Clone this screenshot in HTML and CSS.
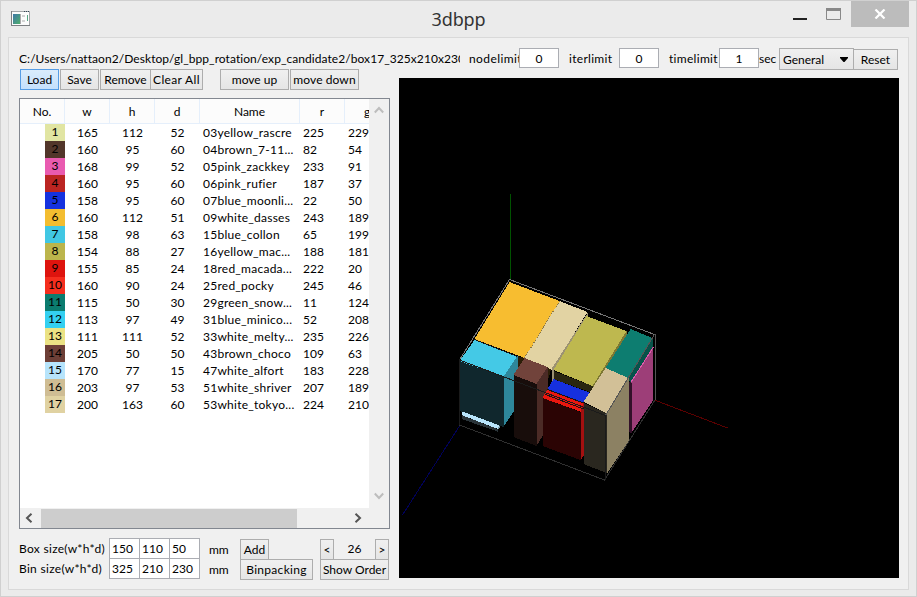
FILE: index.html
```html
<!DOCTYPE html>
<html lang="en">
<head>
<meta charset="utf-8">
<title>3dbpp</title>
<link rel="stylesheet" href="styles.css">
</head>
<body>
<div class="window">
  <header class="titlebar">
    <svg class="app-icon" width="19" height="16" viewBox="0 0 19 16">
      <defs><linearGradient id="ic" x1="0" y1="0" x2="1" y2="1"><stop offset="0" stop-color="#3f78a8"/><stop offset="1" stop-color="#4fae6c"/></linearGradient></defs>
      <path d="M.5 .5h18v14H.5z" fill="#fcfcfc" stroke="#a4a6a8"/>
      <path d="M.5 0v15M0 14.500h19" stroke="#7c7f82"/>
      <path d="M13 .5h1M15 .5h1M17 .5h1" stroke="#345"/>
      <path d="M2 3h7v10H2z" fill="url(#ic)"/>
      <path d="M9.500 3v10" stroke="#aaa"/>
      <path d="M11 4h3v2h-3zM11 9h3v2h-3z" fill="#d4d4d4"/>
      <path d="M16.500 4v6" stroke="#58a584"/>
    </svg>
    <h1 class="title">3dbpp</h1>
    <div class="controls">
      <svg class="min" width="14" height="2"><path d="M0 0h14v2H0z" fill="#222"/></svg>
      <svg class="max" width="15" height="12"><path d="M.5 .5h14v11H.5z" fill="none" stroke="#888"/><path d="M0 0h15v3H0z" fill="#888"/></svg>
      <div class="close"><svg width="12" height="10" viewBox="0 0 12 10"><path d="M1.500 .5l9 9M10.500 .5l-9 9" stroke="#fff" stroke-width="2.200"/></svg></div>
    </div>
  </header>
  <main class="client">
    <section class="left">
      <div class="path">C:/Users/nattaon2/Desktop/gl_bpp_rotation/exp_candidate2/box17_325x210x230</div>
      <div class="toolbar">
        <button class="btn load">Load</button><button class="btn save">Save</button><button class="btn remove">Remove</button><button class="btn clear">Clear All</button><button class="btn up">move up</button><button class="btn down">move down</button>
      </div>
      <div class="list">
        <div class="view">
          <table class="grid">
            <colgroup><col class="c"><col class="c"><col class="c"><col class="c"><col class="cn"><col class="c"><col class="c"></colgroup>
            <thead><tr><th>No.</th><th>w</th><th>h</th><th>d</th><th>Name</th><th>r</th><th>g</th></tr></thead>
            <tbody id="rows"></tbody>
          </table>
        </div>
        <div class="vbar">
          <svg width="10" height="8" viewBox="0 0 10 8"><path d="M.8 6.500L5 2l4.200 4.500" fill="none" stroke="#bdbdbd" stroke-width="2"/></svg>
          <svg width="10" height="8" viewBox="0 0 10 8"><path d="M.8 1.500L5 6l4.200-4.500" fill="none" stroke="#bdbdbd" stroke-width="2"/></svg>
        </div>
        <div class="hbar">
          <svg width="8" height="10" viewBox="0 0 8 10"><path d="M6.500 .8L2 5l4.500 4.200" fill="none" stroke="#555" stroke-width="2"/></svg>
          <div class="track"><div class="thumb"></div></div>
          <svg width="8" height="10" viewBox="0 0 8 10"><path d="M1.500 .8L6 5 1.500 9.200" fill="none" stroke="#555" stroke-width="2"/></svg>
        </div>
      </div>
      <div class="sizes">
        <div class="labels"><span>Box size(w*h*d)</span><span>Bin size(w*h*d)</span></div>
        <div class="fields">
          <div class="field">150</div><div class="field">110</div><div class="field">50</div>
          <div class="field">325</div><div class="field">210</div><div class="field">230</div>
        </div>
        <div class="units"><span>mm</span><span>mm</span></div>
        <div class="actions"><button class="btn add">Add</button><button class="btn pack">Binpacking</button></div>
        <div class="order"><div class="pager"><button class="btn step">&lt;</button><span class="page">26</span><button class="btn step">&gt;</button></div><button class="btn show">Show Order</button></div>
      </div>
    </section>
    <section class="right">
      <div class="limits">
        <span class="lim node">nodelimit</span><div class="num">0</div>
        <span class="lim iter">iterlimit</span><div class="num">0</div>
        <span class="lim time">timelimit</span><div class="num">1</div>
        <span class="sec">sec</span>
        <button class="btn select">General<svg width="8" height="5"><path d="M0 0h8v1L4.500 5h-1L0 1z" fill="#000"/></svg></button>
        <button class="btn reset">Reset</button>
      </div>
      <svg class="scene" width="500" height="500" viewBox="399.500 78 500 500" shape-rendering="crispEdges">
        <path d="M510 194h1v85h-1z" fill="#005200"/>
        <path d="M655 400L728 428" stroke="#5a0000"/>
        <path d="M460 426L403 515" stroke="#000058"/>
        <path d="M510 279.500L655 334.500M460 360L510 279.500" stroke="#777" fill="none"/>
        <path d="M655.500 334V400L605 480 460 425" stroke="#2f2f2f" fill="none"/>
        <path d="M518 356L525 358 552 368 543 398 514 376z" fill="#2b1e08"/>
        <path d="M510 282L560 301 525 358 475 339z" fill="#f7bd30"/>
        <path d="M560 301L588 312 552 370 548 367 525 358z" fill="#e2d3a3"/>
        <path d="M560 301L525 358" stroke="#8a7744" stroke-dasharray="1 1"/>
        <path d="M588 313V318L554 371V381H552V369z" fill="#9c9272"/>
        <path d="M587 316L627 331 593 386 554 370z" fill="#beb84f"/>
        <path d="M627 331V336L594 389 593 386z" fill="#7d7833"/>
        <path d="M554 371L593 386V393L554 379z" fill="#292611"/>
        <path d="M554 379L591 393 584 403 548 389z" fill="#1630df"/>
        <path d="M548 389L584 403 582 412 543 398z" fill="#e9170f"/>
        <path d="M543 398L581 412V460L543 446z" fill="#2b0404"/>
        <path d="M581 412L584 403V456L581 460z" fill="#a41010"/>
        <path d="M475 340L518 356 504 377 460 361z" fill="#44c9e6"/>
        <path d="M460 361L504 377V427L460 411z" fill="#10272d"/>
        <path d="M504 377L518 356V406L504 427z" fill="#2e879b"/>
        <path d="M463 411.500L500 425.500 498.500 429 462 415z" fill="#b8e5fc"/>
        <path d="M462 415L498 429V431.500L462 419z" fill="#293338"/>
        <path d="M498 429L500 426V428L498 431z" fill="#7c9caa"/>
        <path d="M525 358L548 367 537 384 514 375z" fill="#71433b"/>
        <path d="M514 375L537 384V446L514 437z" fill="#180d0b"/>
        <path d="M537 384L548 367V389L543 398V436L537 446z" fill="#4b2b26"/>
        <path d="M631 329L653 338 629 378 606 368z" fill="#0d7d70"/>
        <path d="M653 338V348L631 384 629 378z" fill="#07534a"/>
        <path d="M653 347L654 400 632 433 631 383z" fill="#9d3e78"/>
        <path d="M631 383L654 347" stroke="#df5cae"/>
        <path d="M629 381L632 383V433L629 432z" fill="#33112a"/>
        <path d="M606 368L629 378 607 413 584 402z" fill="#d2c097"/>
        <path d="M584 403L607 413V473L584 464z" fill="#2a271f"/>
        <path d="M607 413L629 378V441L608 473z" fill="#8c8163"/>
        <path d="M475 339.500L518 356.500M548 389.500L584 403M546 394.500L584 409" stroke="#161616"/>
        <path d="M460 425V360L606 415.500V480" stroke="#1b1b1b" fill="none"/>
        <path d="M606 415.500L655 334.500" stroke="#555"/>
        <path d="M655.500 334V400" stroke="#555"/>
      </svg>
    </section>
  </main>
</div>
<script src="rows.js"></script>
</body>
</html>
```
FILE: styles.css
```css
* { box-sizing: border-box; }
body { margin: 0; font: 12px/17px Lato, "Liberation Sans", sans-serif; color: #000; }
.window { width: 917px; height: 597px; background: #ebebeb; border: 1px solid #d0d0d0; padding: 0 7px 7px; overflow: hidden; display: flex; flex-direction: column; }
.titlebar { height: 36px; flex: none; display: flex; position: relative; justify-content: center; }
.app-icon { position: absolute; left: 3px; top: 10px; }
.title { margin: 6px 0 0; font: 18px/24px "Noto Sans", sans-serif; letter-spacing: -.15px; color: #333; }
.controls { position: absolute; right: 0; top: 0; display: flex; }
.min { margin: 17px 19px 0 0; }
.max { margin: 7px 10px 0 0; }
.close { width: 58px; height: 26px; background: #bcbcbc; display: flex; align-items: center; justify-content: center; }
.client { height: 553px; border: 1px solid #d9d9d9; background: #f0f0f0; display: flex; padding: 10px 9px 10px 10px; gap: 9px; }
.left { width: 371px; flex: none; white-space: nowrap; }
.path { width: 441px; height: 21px; overflow: hidden; padding-top: 2px; letter-spacing: .06px; }
.btn { font: inherit; color: #000; height: 21px; padding: 0; border: 1px solid #adadad; background: linear-gradient(#f0f0f0, #e5e5e5); flex: none; white-space: nowrap; text-align: center; line-height: 19px; }
.toolbar { display: flex; height: 21px; }
.load { width: 39px; margin: 0 1px; border-color: #569de5; background: linear-gradient(#daecfc, #c4e0fc); }
.save { width: 39px; margin-right: 1px; }
.remove { width: 51px; margin-right: -1px; }
.clear { width: 53px; margin-right: 17px; letter-spacing: .35px; }
.up { width: 69px; margin-right: 1px; }
.down { width: 69px; letter-spacing: .1px; }
.list { width: 371px; height: 431px; margin-top: 8px; border: 1px solid #828790; background: #f0f0f0; display: grid; grid-template: 409px 20px / 349px 20px; }
.view { background: #fff; overflow: hidden; }
.grid { width: 370px; table-layout: fixed; border-collapse: separate; border-spacing: 0; }
.c { width: 45px; }
.cn { width: 100px; }
.grid th { height: 25px; padding: 0; font-weight: 400; background: #fcfcfc; border-right: 1px solid #e5effb; border-bottom: 1px solid #e5effb; }
.grid td { height: 17px; padding: 0; line-height: 16px; text-align: center; }
.grid td.text { text-align: left; padding-left: 3px; line-height: 18px; }
.text span { display: block; height: 17px; }
.name { letter-spacing: .25px; }
.swatch { width: 20px; height: 17px; margin-left: 25px; }
.vbar { display: flex; flex-direction: column; align-items: center; justify-content: space-between; padding: 7px 1px 8px 0; }
.hbar { grid-column: 1 / 3; display: flex; align-items: center; padding: 0 27px 0 5px; }
.track { flex: 1; height: 19px; margin: 0 4px 0 8px; }
.thumb { width: 256px; height: 19px; background: #cdcdcd; }
.sizes { display: flex; margin-top: 9px; height: 42px; }
.labels { width: 90px; display: flex; flex-direction: column; gap: 3px; padding-top: 2px; letter-spacing: .3px; }
.fields { width: 91px; display: grid; grid-template: 20px 20px / 30px 30px 31px; }
.field { background: #fff; border: 1px solid #abadb3; margin-right: -1px; margin-bottom: -1px; padding-left: 2px; line-height: 19px; }
.field:nth-child(3n) { margin-right: 0; }
.units { width: 40px; padding: 3px 0 0 9px; display: flex; flex-direction: column; gap: 3px; }
.actions { width: 80px; display: flex; flex-direction: column; padding-top: 1px; }
.add { width: 29px; margin-bottom: -1px; }
.pack { width: 73px; letter-spacing: .3px; }
.order { width: 69px; padding-top: 1px; }
.pager { display: flex; margin-bottom: -1px; }
.step { width: 14px; }
.page { flex: 1; text-align: center; line-height: 19px; }
.show { width: 69px; }
.right { width: 500px; position: relative; }
.limits { margin-left: 62px; width: 438px; display: flex; height: 30px; white-space: nowrap; }
.lim { padding: 2px 0 0 8px; overflow: hidden; flex: none; letter-spacing: .3px; }
.node { width: 58px; letter-spacing: .4px; }
.iter { width: 60px; padding-left: 10px; }
.time { width: 60px; padding-left: 10px; }
.num { width: 40px; height: 20px; border: 1px solid #abadb3; background: #fff; line-height: 20px; text-align: center; flex: none; }
.sec { width: 20px; padding-top: 2px; flex: none; }
.select { width: 75px; height: 22px; display: flex; justify-content: space-between; align-items: center; padding: 1px 5px 0 3px; }
.reset { width: 45px; margin: 1px 0 0 -1px; }
.scene { display: block; background: #000; }
```
FILE: rows.js
```js
const boxes = [
  [165, 112, 52, "03yellow_rascre", 225, 229, "#e1e5a2"],
  [160, 95, 60, "04brown_7-11...", 82, 54, "#52362a"],
  [168, 99, 52, "05pink_zackkey", 233, 91, "#e95bb0"],
  [160, 95, 60, "06pink_rufier", 187, 37, "#bb2522"],
  [158, 95, 60, "07blue_moonli...", 22, 50, "#1632df"],
  [160, 112, 51, "09white_dasses", 243, 189, "#f3bd30"],
  [158, 98, 63, "15blue_collon", 65, 199, "#41c7e3"],
  [154, 88, 27, "16yellow_mac...", 188, 181, "#bcb54c"],
  [155, 85, 24, "18red_macada...", 222, 20, "#de140e"],
  [160, 90, 24, "25red_pocky", 245, 46, "#f52e1e"],
  [115, 50, 30, "29green_snow...", 11, 124, "#0b7c6f"],
  [113, 97, 49, "31blue_minico...", 52, 208, "#34d0f1"],
  [111, 111, 52, "33white_melty...", 235, 226, "#ebe284"],
  [205, 50, 50, "43brown_choco", 109, 63, "#6d3f37"],
  [170, 77, 15, "47white_alfort", 183, 228, "#b7e4fb"],
  [203, 97, 53, "51white_shriver", 207, 189, "#cfbd94"],
  [200, 163, 60, "53white_tokyo...", 224, 210, "#e0d2a2"]
];
document.getElementById("rows").innerHTML = boxes.map((b, i) =>
  `<tr><td><div class="swatch" style="background:${b[6]}">${i + 1}</div></td>` +
  b.slice(0, 3).map(v => `<td>${v}</td>`).join("") +
  b.slice(3, 6).map((v, k) => `<td class="text"><span${k ? "" : ' class="name"'}>${v}</span></td>`).join("") + "</tr>"
).join("");
```
